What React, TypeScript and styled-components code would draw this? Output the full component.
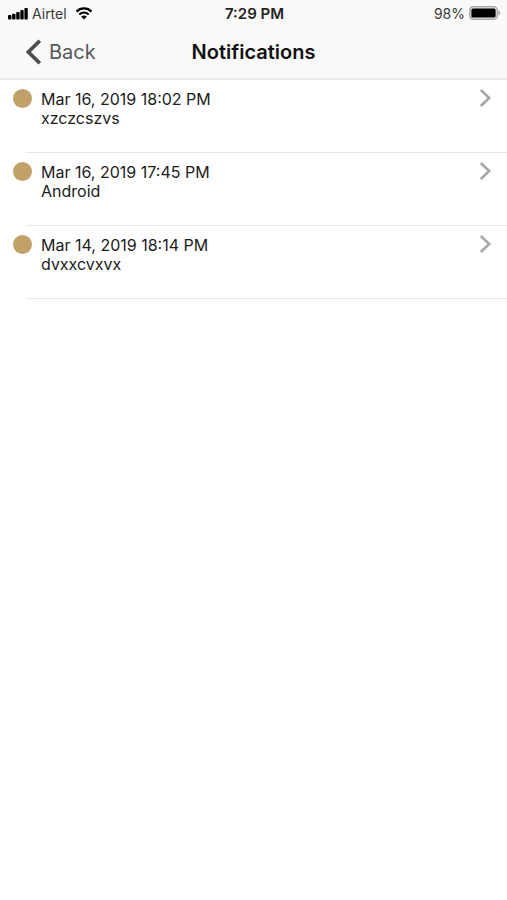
import React from "react";
import styled, { createGlobalStyle } from "styled-components";

const GlobalStyle = createGlobalStyle`
  *, *::before, *::after { box-sizing: border-box; }
  body {
    margin: 0;
    background: #ffffff;
    color: #1c1c1c;
    font-family: Inter, Roboto, "Liberation Sans", sans-serif;
  }
`;

const Screen = styled.div`
  min-height: 100vh;
  background: #ffffff;
`;

const Header = styled.header`
  background: #f9f9f9;
  border-bottom: 2px solid #ebebeb;
`;

const StatusBar = styled.div`
  display: grid;
  grid-template-columns: 1fr auto 1fr;
  align-items: center;
  height: 26px;
  padding: 0 6px 0 8px;
`;

const StatusGroup = styled.div<{ $end?: boolean }>`
  display: flex;
  align-items: center;
  justify-content: ${(p) => (p.$end ? "flex-end" : "flex-start")};
  gap: 4px;
`;

const StatusText = styled.span`
  padding-top: 2px;
  font-size: 14px;
  line-height: 20px;
  color: #3a3a3a;
`;

const Carrier = styled(StatusText)`
  margin-right: 4px;
`;

const Clock = styled(StatusText)`
  font-size: 15px;
  font-weight: 600;
  color: #222222;
`;

const NavBar = styled.nav`
  display: grid;
  grid-template-columns: 1fr auto 1fr;
  align-items: center;
  height: 52px;
  padding: 0 24px;
`;

const BackButton = styled.button`
  display: flex;
  align-items: center;
  justify-self: start;
  gap: 6px;
  padding: 0;
  border: 0;
  background: none;
  font: inherit;
  font-size: 20px;
  line-height: 28px;
  color: #58595a;
  cursor: pointer;
`;

const Title = styled.h1`
  margin: 0;
  font-size: 20px;
  line-height: 28px;
  font-weight: 600;
  color: #111111;
`;

const List = styled.ul`
  margin: 0;
  padding: 0;
  list-style: none;
`;

const Item = styled.li`
  &::after {
    content: "";
    display: block;
    height: 1px;
    margin-left: 26px;
    background: #e8e8e8;
  }
`;

const ItemButton = styled.button`
  display: flex;
  align-items: flex-start;
  width: 100%;
  height: 72px;
  padding: 9px 14px 0 13px;
  border: 0;
  background: none;
  font: inherit;
  font-size: 16px;
  line-height: 19px;
  color: inherit;
  text-align: left;
  cursor: pointer;
`;

const Dot = styled.span`
  flex: none;
  width: 19px;
  height: 19px;
  margin-right: 9px;
  border-radius: 50%;
  background: #c1a069;
`;

const Details = styled.span`
  display: flex;
  flex: 1;
  flex-direction: column;
  min-width: 0;
  padding-top: 1px;
`;

const SignalIcon = () => (
  <svg width="20" height="13" viewBox="0 0 20 13" fill="#000" aria-hidden="true">
    <rect x="0" y="8" width="3.4" height="4.5" rx="1" />
    <rect x="4.1" y="6.7" width="3.4" height="5.8" rx="1" />
    <rect x="8.2" y="5" width="3.4" height="7.5" rx="1" />
    <rect x="12.3" y="3" width="3.4" height="9.5" rx="1" />
    <rect x="16.4" y="1" width="3.4" height="11.5" rx="1" />
  </svg>
);

const WifiIcon = () => (
  <svg width="18" height="13" viewBox="0 0 17 13" fill="none" stroke="#000" aria-hidden="true">
    <path d="M1 4.6C5.2.4 11.8.4 16 4.6" strokeWidth="2.3" />
    <path d="M3.8 7.5c2.7-2.6 6.7-2.6 9.4 0" strokeWidth="2.1" />
    <path d="M8.5 12.6 5.6 9.7c1.7-1.5 4.1-1.5 5.8 0z" fill="#000" stroke="none" />
  </svg>
);

const BatteryIcon = () => (
  <svg width="32" height="14" viewBox="0 0 32 14" aria-hidden="true">
    <rect x="0.7" y="0.7" width="27.6" height="12.6" rx="3.6" fill="#dedede" stroke="#a6a6a6" strokeWidth="1.3" />
    <rect x="2.4" y="2.4" width="24.2" height="9.2" rx="1.6" fill="#000" />
    <path d="M29.4 4.6c2.4.6 2.4 4.2 0 4.8z" fill="#a6a6a6" />
  </svg>
);

const BackIcon = () => (
  <svg width="19" height="26" viewBox="0 0 19 26" fill="none" stroke="#4c4d4f" strokeWidth="3.7" aria-hidden="true">
    <path d="M15.8 1.8 4.4 13 15.8 24.2" />
  </svg>
);

const DisclosureIcon = () => (
  <svg width="14" height="18" viewBox="0 0 14 18" fill="none" stroke="#a6a6a6" strokeWidth="2.6" aria-hidden="true">
    <path d="M1.8 1 10.2 9 1.8 17" />
  </svg>
);

const notifications = [
  { date: "Mar 16, 2019 18:02 PM", message: "xzczcszvs" },
  { date: "Mar 16, 2019 17:45 PM", message: "Android" },
  { date: "Mar 14, 2019 18:14 PM", message: "dvxxcvxvx" },
];

export default function App() {
  return (
    <Screen>
      <GlobalStyle />
      <Header>
        <StatusBar>
          <StatusGroup>
            <SignalIcon />
            <Carrier>Airtel</Carrier>
            <WifiIcon />
          </StatusGroup>
          <Clock as="time">7:29 PM</Clock>
          <StatusGroup $end>
            <StatusText>98%</StatusText>
            <BatteryIcon />
          </StatusGroup>
        </StatusBar>
        <NavBar>
          <BackButton type="button">
            <BackIcon />
            Back
          </BackButton>
          <Title>Notifications</Title>
        </NavBar>
      </Header>
      <main>
        <List>
          {notifications.map((n) => (
            <Item key={n.date}>
              <ItemButton type="button">
                <Dot />
                <Details>
                  <span>{n.date}</span>
                  <span>{n.message}</span>
                </Details>
                <DisclosureIcon />
              </ItemButton>
            </Item>
          ))}
        </List>
      </main>
    </Screen>
  );
}
